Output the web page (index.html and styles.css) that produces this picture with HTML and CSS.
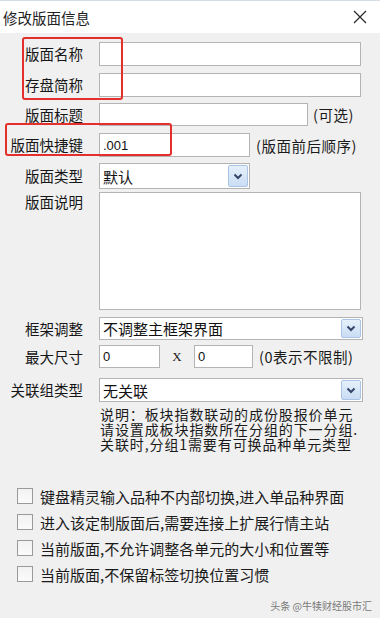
FILE: index.html
```html
<!DOCTYPE html>
<html lang="zh-CN">
<head>
    <meta charset="UTF-8">
    <title>修改版面信息</title>
    <link rel="stylesheet" href="styles.css">
</head>
<body>
    <div class="window">
        <div class="titlebar">
            <span class="title">修改版面信息</span>
            <svg class="close" width="14" height="14" viewBox="0 0 14 14">
                <path d="M1 1 L13 13 M13 1 L1 13" stroke="#2b2b2b" stroke-width="1.3" fill="none"/>
            </svg>
        </div>

        <div class="form">
            <div class="row r1">
                <label class="label">版面名称</label>
                <input class="field w262" type="text">
            </div>
            <div class="row r2">
                <label class="label">存盘简称</label>
                <input class="field w262" type="text">
            </div>
            <div class="row r3">
                <label class="label">版面标题</label>
                <input class="field w209" type="text">
                <span class="hint h-opt">(可选)</span>
            </div>
            <div class="row r4">
                <label class="label">版面快捷键</label>
                <input class="field w151" type="text" value=".001">
                <span class="hint h-order">(版面前后顺序)</span>
            </div>
            <div class="row r5">
                <label class="label">版面类型</label>
                <div class="combo w151">
                    <span class="combo-text">默认</span>
                    <span class="combo-btn">
                        <svg width="10" height="7" viewBox="0 0 10 7"><path d="M1.5 1.5 L5 5 L8.5 1.5" stroke="#34466a" stroke-width="2" fill="none"/></svg>
                    </span>
                </div>
            </div>
            <div class="row r6">
                <label class="label">版面说明</label>
                <textarea class="memo"></textarea>
            </div>
            <div class="row r7">
                <label class="label">框架调整</label>
                <div class="combo w264">
                    <span class="combo-text">不调整主框架界面</span>
                    <span class="combo-btn">
                        <svg width="10" height="7" viewBox="0 0 10 7"><path d="M1.5 1.5 L5 5 L8.5 1.5" stroke="#34466a" stroke-width="2" fill="none"/></svg>
                    </span>
                </div>
            </div>
            <div class="row r8">
                <label class="label">最大尺寸</label>
                <input class="field w61" type="text" value="0">
                <span class="times">X</span>
                <input class="field w59" type="text" value="0">
                <span class="hint h-limit">(0表示不限制)</span>
            </div>
            <div class="row r9">
                <label class="label">关联组类型</label>
                <div class="combo w264">
                    <span class="combo-text">无关联</span>
                    <span class="combo-btn">
                        <svg width="10" height="7" viewBox="0 0 10 7"><path d="M1.5 1.5 L5 5 L8.5 1.5" stroke="#34466a" stroke-width="2" fill="none"/></svg>
                    </span>
                </div>
            </div>
            <div class="note">
                <div class="note-line">说明：板块指数联动的成份股报价单元</div>
                <div class="note-line">请设置成板块指数所在分组的下一分组.</div>
                <div class="note-line">关联时,分组1需要有可换品种单元类型</div>
            </div>
        </div>

        <div class="options">
            <label class="option"><span class="check"></span>键盘精灵输入品种不内部切换,进入单品种界面</label>
            <label class="option"><span class="check"></span>进入该定制版面后,需要连接上扩展行情主站</label>
            <label class="option"><span class="check"></span>当前版面,不允许调整各单元的大小和位置等</label>
            <label class="option"><span class="check"></span>当前版面,不保留标签切换位置习惯</label>
        </div>

        <div class="watermark">头条 @牛犊财经股市汇</div>

        <!-- Markierungen -->
        <div class="mark mark-names"></div>
        <div class="mark mark-key"></div>
    </div>
</body>
</html>
```

FILE: styles.css
```css
/* Grundlayout */
body {
    margin: 0;
    padding: 0;
    background: #f0f0f0;
    font-family: "Noto Sans CJK SC", "Noto Sans", sans-serif;
    color: #1a1a1a;
}

.window {
    position: relative;
    width: 380px;
    height: 618px;
    background: #f0f0f0;
    overflow: hidden;
}

/* Titelleiste */
.titlebar {
    height: 33px;
    background: #ffffff;
    border-top: 1px solid #d5dde6;
    box-sizing: border-box;
    display: flex;
    align-items: center;
    justify-content: space-between;
    padding: 0 13px 0 3px;
}

.title {
    font-size: 14.5px;
    color: #222;
}

/* Formular */
.form {
    padding-top: 9px;
}

.row {
    display: flex;
    align-items: center;
    height: 24px;
}

.label {
    width: 83px;
    margin-right: 16px;
    text-align: right;
    font-size: 14.5px;
    line-height: 20px;
    white-space: nowrap;
    color: #161616;
}

.r2 { margin-top: 7px; }
.r3 { margin-top: 6px; height: 23px; }
.r4 { margin-top: 7px; }
.r5 { margin-top: 6px; height: 26px; }
.r6 { margin-top: 3px; height: 118px; align-items: flex-start; }
.r7 { margin-top: 7px; height: 23px; }
.r8 { margin-top: 5px; height: 23px; }
.r9 { margin-top: 10px; }

.field {
    height: 100%;
    box-sizing: border-box;
    border: 1px solid #b4b4b4;
    background: #fff;
    padding: 0 3px;
    margin: 0;
    font-family: "Liberation Sans", sans-serif;
    font-size: 13px;
    color: #111;
    outline: none;
}

.w262 { width: 262px; }
.w209 { width: 209px; }
.w151 { width: 151px; }
.w264 { width: 264px; }
.w61 { width: 61px; }
.w59 { width: 59px; }

.hint {
    font-size: 14.5px;
    white-space: nowrap;
    color: #1a1a1a;
    letter-spacing: 0.5px;
}

.h-opt { margin-left: 5px; }
.h-order { margin-left: 6px; }
.h-limit { margin-left: 6px; }

.times {
    width: 34px;
    text-align: center;
    font-family: "Liberation Serif", serif;
    font-size: 13px;
}

/* Auswahlfeld */
.combo {
    height: 100%;
    box-sizing: border-box;
    border: 1px solid #b4b4b4;
    background: #fff;
    display: flex;
    align-items: center;
    justify-content: space-between;
    padding: 1px;
}

.combo-text {
    padding-left: 2px;
    font-size: 15px;
    color: #111;
}

.combo-btn {
    width: 20px;
    height: 100%;
    box-sizing: border-box;
    border: 1px solid #a9c4e4;
    border-radius: 2px;
    background: linear-gradient(#e6f0fb, #c9ddf4);
    display: flex;
    align-items: center;
    justify-content: center;
}

.memo {
    width: 262px;
    height: 118px;
    box-sizing: border-box;
    border: 1px solid #b4b4b4;
    background: #fff;
    margin: 0;
    resize: none;
    outline: none;
}

.note {
    margin: 5px 0 0 100px;
}

.note-line {
    height: 15px;
    font-size: 14px;
    line-height: 15px;
    letter-spacing: 0.9px;
    color: #1a1a1a;
    white-space: nowrap;
}

/* Optionen */
.options {
    margin-top: 31px;
    padding-left: 17px;
}

.option {
    display: flex;
    align-items: center;
    height: 26px;
    font-size: 15px;
    color: #1a1a1a;
    white-space: nowrap;
}

.check {
    width: 16px;
    height: 16px;
    box-sizing: border-box;
    border: 1px solid #9a9a9a;
    background: linear-gradient(#f2f2f2, #fbfbfb);
    margin-right: 7px;
}

.watermark {
    position: absolute;
    right: 8px;
    top: 598px;
    font-size: 10px;
    color: #7a7a7a;
}

/* Rote Markierungen */
.mark {
    position: absolute;
    border: 2px solid #e3302c;
    border-radius: 3px;
    box-sizing: border-box;
}

.mark-names {
    left: 22px;
    top: 37px;
    width: 101px;
    height: 63px;
}

.mark-key {
    left: 5px;
    top: 123px;
    width: 167px;
    height: 33px;
}
```
